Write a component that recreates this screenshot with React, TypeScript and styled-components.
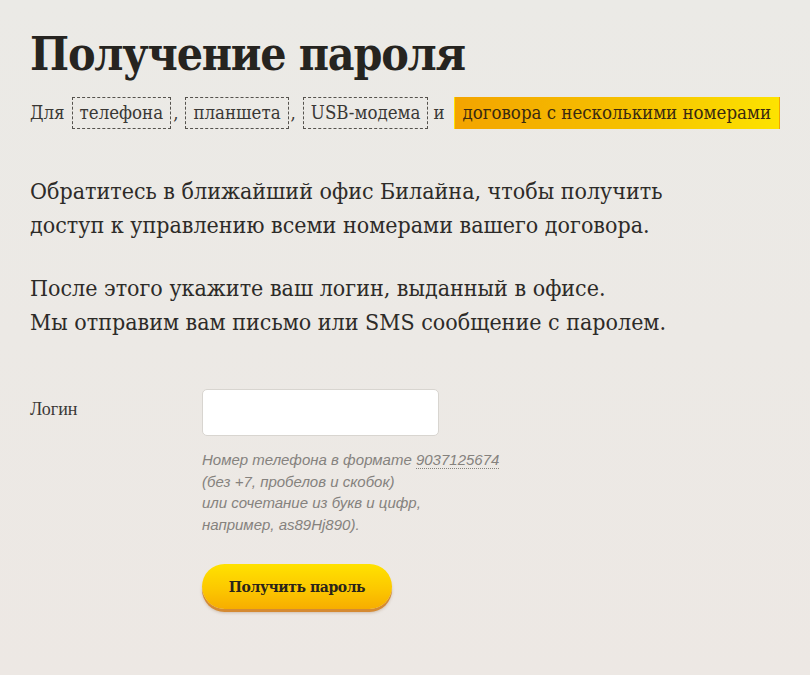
import React from "react";
import styled, { createGlobalStyle } from "styled-components";

const GlobalStyle = createGlobalStyle`
  html, body {
    margin: 0;
    padding: 0;
    background: #ebe9e5;
  }
`;

const slab = `"DejaVu Serif Condensed", "DejaVu Serif", serif`;

const Page = styled.div`
  width: 810px;
  height: 675px;
  box-sizing: border-box;
  padding: 26px 30px 0;
  background: linear-gradient(180deg, #ebeae6 0%, #ede8e4 100%);
  color: #2b2926;
  font-family: ${slab};
  font-stretch: condensed;
  overflow: hidden;
`;

const Title = styled.h1`
  margin: 0;
  font-size: 46px;
  font-weight: 700;
  line-height: 56px;
  letter-spacing: -1.2px;
  color: #262420;
`;

const Tabs = styled.div`
  display: flex;
  align-items: center;
  margin-top: 15px;
  font-size: 18.5px;
  line-height: 26px;
  white-space: nowrap;
  color: #3a3835;
`;

const Word = styled.span<{ $left?: number; $right?: number }>`
  flex-shrink: 0;
  margin: 0 ${(p) => p.$right ?? 7}px 0 ${(p) => p.$left ?? 0}px;
`;

const Tab = styled.span<{ $active?: boolean }>`
  flex-shrink: 0;
  display: inline-block;
  padding: 2px ${(p) => (p.$active ? 8 : 7)}px;
  border: 1px dashed ${(p) => (p.$active ? "transparent" : "#55524d")};
  background: ${(p) =>
    p.$active ? "linear-gradient(90deg, #f3a400 0%, #f6c400 60%, #fde300 100%)" : "transparent"};
  color: ${(p) => (p.$active ? "#3a2a10" : "#3a3835")};
`;

const Comma = styled.span`
  flex-shrink: 0;
  margin: 0 7px 0 2px;
`;

const Body = styled.div`
  display: flex;
  flex-direction: column;
  gap: 30px;
  margin-top: 46px;
`;

const Text = styled.p`
  margin: 0;
  font-size: 23px;
  line-height: 33.5px;
  color: #2d2b28;
`;

const Form = styled.div`
  display: grid;
  grid-template-columns: 172px 1fr;
  margin-top: 50px;
`;

const Label = styled.label`
  padding-top: 10px;
  font-family: "Liberation Serif", serif;
  font-size: 18px;
  color: #3a3835;
`;

const Field = styled.div`
  display: flex;
  flex-direction: column;
`;

const Input = styled.input`
  width: 237px;
  height: 47px;
  box-sizing: border-box;
  border: 1px solid #d8d5d0;
  border-radius: 5px;
  background: #fff;
  outline: none;
`;

const Hint = styled.div`
  margin-top: 13px;
  font-family: "Liberation Sans", Arial, sans-serif;
  font-style: italic;
  font-size: 15px;
  line-height: 21.7px;
  color: #85827e;
`;

const Phone = styled.span`
  border-bottom: 1px dotted #85827e;
`;

const Button = styled.button`
  margin-top: 28px;
  width: 190px;
  height: 45px;
  border: none;
  border-radius: 23px;
  background: linear-gradient(180deg, #ffe200 0%, #fcc800 55%, #f7ad00 100%);
  box-shadow: 0 3px 0 #d58a32, 0 4px 3px rgba(120, 70, 20, 0.25);
  font-family: ${slab};
  font-stretch: condensed;
  font-weight: 700;
  font-size: 15.5px;
  letter-spacing: -0.4px;
  color: #2a241a;
  cursor: pointer;
`;

export default function App() {
  return (
    <Page>
      <GlobalStyle />
      <Title>Получение пароля</Title>
      <Tabs>
        <Word $right={7}>Для</Word>
        <Tab>телефона</Tab>
        <Comma>,</Comma>
        <Tab>планшета</Tab>
        <Comma>,</Comma>
        <Tab>USB-модема</Tab>
        <Word $left={5} $right={9}>и</Word>
        <Tab $active>договора с несколькими номерами</Tab>
      </Tabs>
      <Body>
        <Text>
          Обратитесь в ближайший офис Билайна, чтобы получить
          <br />
          доступ к управлению всеми номерами вашего договора.
        </Text>
        <Text>
          После этого укажите ваш логин, выданный в офисе.
          <br />
          Мы отправим вам письмо или SMS сообщение с паролем.
        </Text>
      </Body>
      <Form>
        <Label>Логин</Label>
        <Field>
          <Input type="text" />
          <Hint>
            Номер телефона в формате <Phone>9037125674</Phone>
            <br />
            (без +7, пробелов и скобок)
            <br />
            или сочетание из букв и цифр,
            <br />
            например, as89Hj890).
          </Hint>
          <Button>Получить пароль</Button>
        </Field>
      </Form>
    </Page>
  );
}
